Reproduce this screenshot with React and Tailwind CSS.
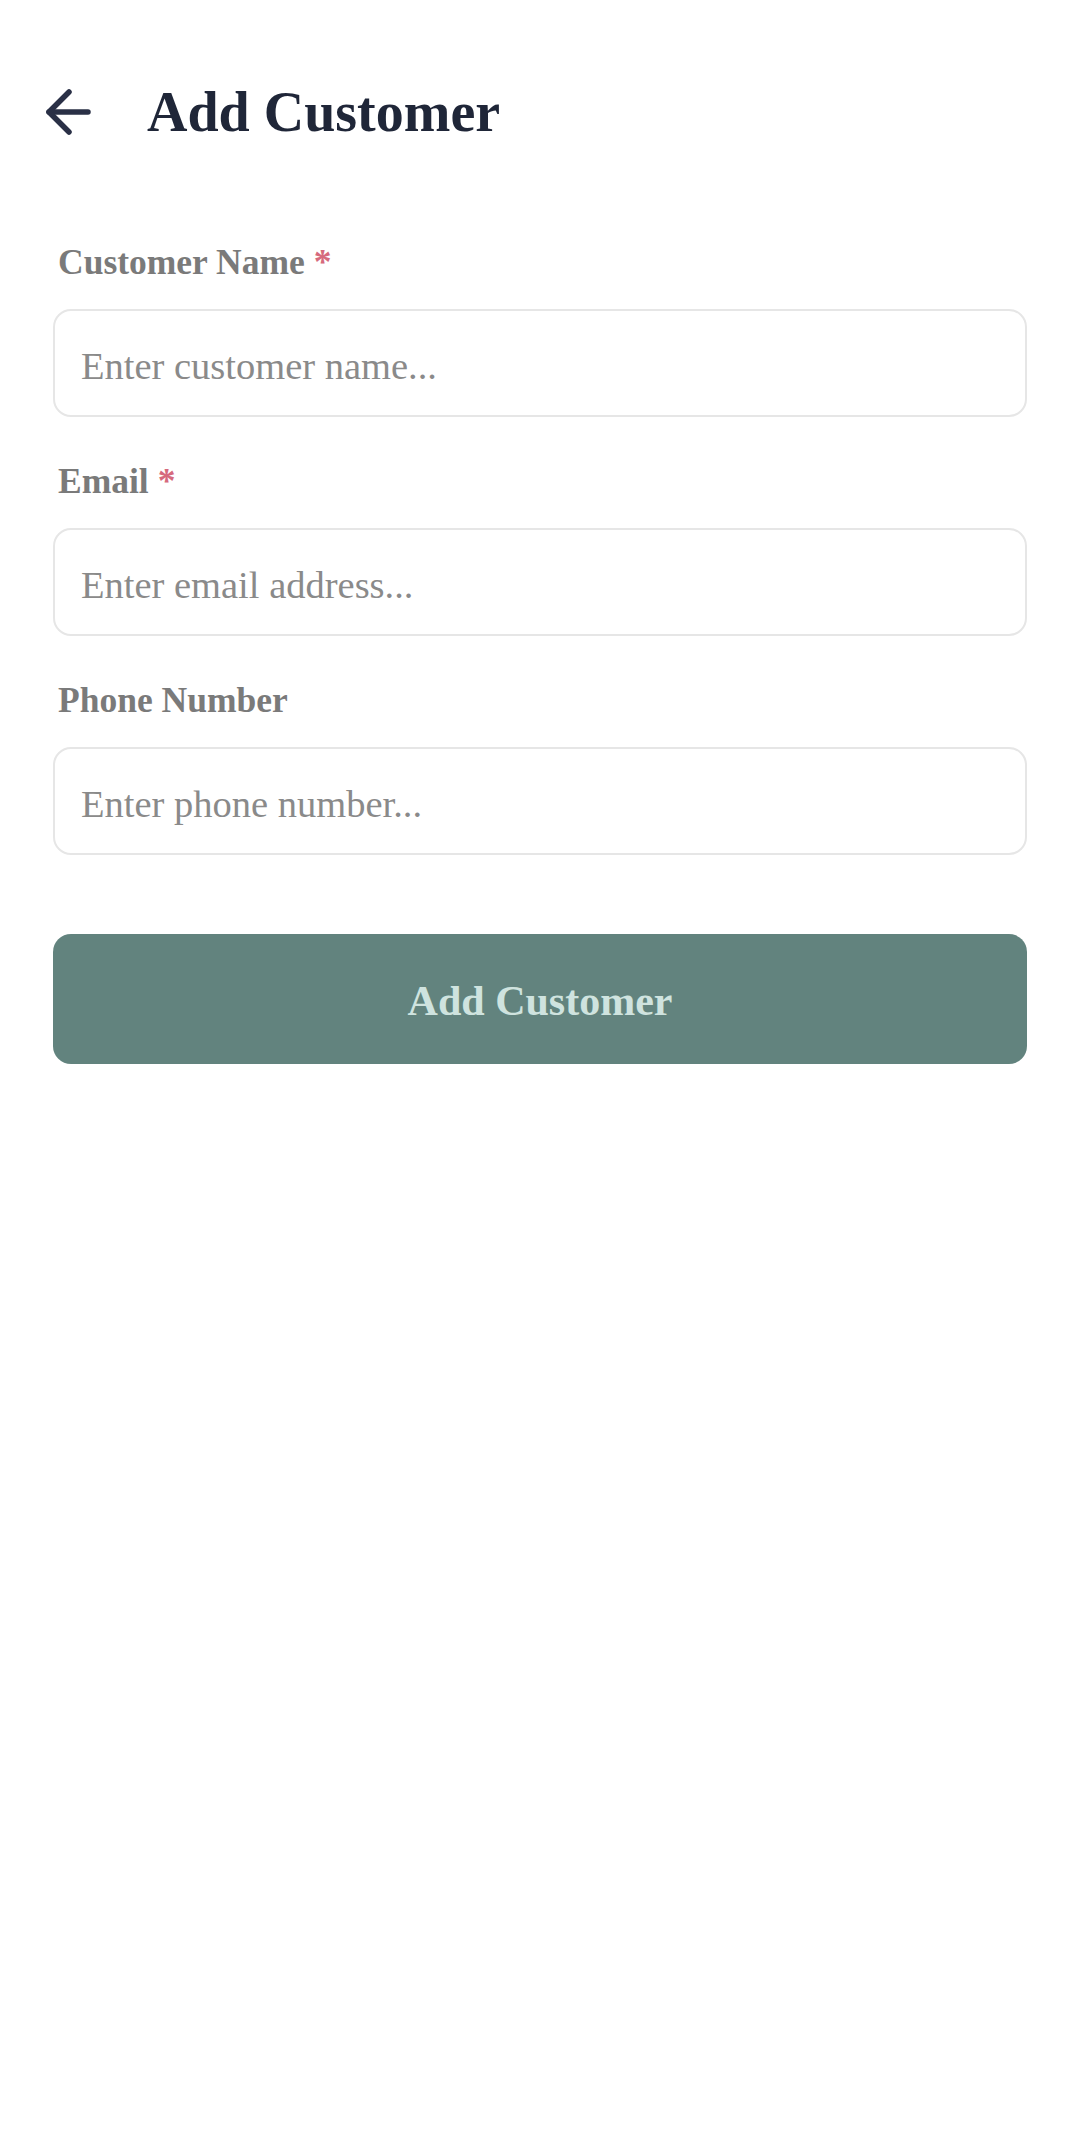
import React from "react";

function Field({ label, required, placeholder, type = "text" }) {
  return (
    <div className="flex flex-col">
      <label className="h-[40px] pl-[5px] text-[35.5px] leading-[40px] font-bold text-[#7a7a7a] whitespace-nowrap">
        {label}
        {required && <span className="ml-[9px] text-[#d66a7d]">*</span>}
      </label>
      <input
        type={type}
        placeholder={placeholder}
        className="mt-[27px] h-[108px] w-full rounded-[18px] border-2 border-[#e6e6e6] bg-white pl-[26px] pr-[26px] pt-[5px] text-[38.5px] text-[#333] placeholder:text-[#8a8a8a] outline-none"
        style={{ fontFamily: '"Liberation Serif", "Times New Roman", serif' }}
      />
    </div>
  );
}

export default function App() {
  return (
    <div
      className="min-h-[2137px] w-full bg-white"
      style={{ fontFamily: '"Liberation Serif", "Times New Roman", serif' }}
    >
      <header className="flex h-[80px] items-center pl-[45px] mt-[72px]">
        <button className="flex h-[46px] w-[46px] items-center justify-center" aria-label="Back">
          <svg width="46" height="46" viewBox="0 0 46 46" fill="none" stroke="#2a3046" strokeWidth="5.5" strokeLinecap="round" strokeLinejoin="round">
            <path d="M43 23H4" />
            <path d="M24 3 4 23l20 20" />
          </svg>
        </button>
        <h1 className="ml-[56px] text-[56px] leading-[67px] font-bold text-[#1f2638]">Add Customer</h1>
      </header>

      <main className="mt-[90px] flex flex-col px-[53px]">
        <div className="flex flex-col gap-[44px]">
          <Field label="Customer Name" required placeholder="Enter customer name..." />
          <Field label="Email" required placeholder="Enter email address..." type="email" />
          <Field label="Phone Number" placeholder="Enter phone number..." type="tel" />
        </div>
        <button className="mt-[79px] flex h-[130px] w-full items-center justify-center rounded-[18px] bg-[#62837e] pt-[5px] text-[42px] font-bold text-[#cfe3df]">
          Add Customer
        </button>
      </main>
    </div>
  );
}
